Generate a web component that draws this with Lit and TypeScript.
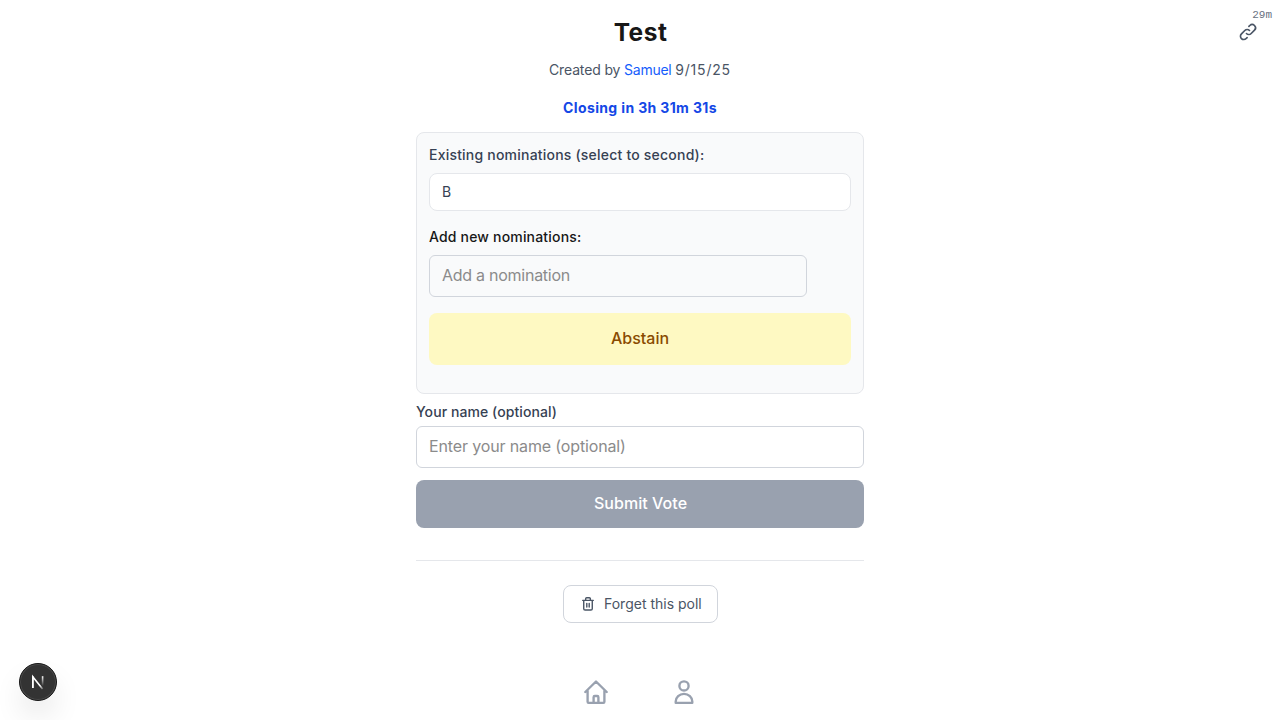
import { LitElement, html, css, svg } from "lit";
import { customElement, property } from "lit/decorators.js";

const icon = (size: number, stroke: number, body: unknown) => html`
  <svg width=${size} height=${size} viewBox="0 0 24 24" fill="none" stroke="currentColor"
    stroke-width=${stroke} stroke-linecap="round" stroke-linejoin="round">${body}</svg>`;

const linkShape = svg`<path d="M13.828 10.172a4 4 0 0 0-5.656 0l-4 4a4 4 0 1 0 5.656 5.656l1.102-1.101m-.758-4.899a4 4 0 0 0 5.656 0l4-4a4 4 0 0 0-5.656-5.656l-1.1 1.1"/>`;
const trashShape = svg`<path d="M4 6.5h16M5.6 6.5V19a2 2 0 0 0 2 2h8.8a2 2 0 0 0 2-2V6.5M8.5 6.5V4.2a1.5 1.5 0 0 1 1.5-1.5h4a1.5 1.5 0 0 1 1.5 1.5v2.3M10.2 11v5.5M13.8 11v5.5"/>`;
const homeShape = svg`<path d="M1.3 12 12 1.5 22.7 12M3.6 10.5v11.3q0 1 1 1h14.8q1 0 1-1V10.5M9.6 22.6v-5.4q0-1.2 1.2-1.2h2.4q1.2 0 1.2 1.2v5.4"/>`;
const userShape = svg`<circle cx="12" cy="5.9" r="4.6"/><path d="M3.7 22.8v-1.3a8.3 7.6 0 0 1 16.6 0v1.3z"/>`;

@customElement("dev-badge")
export class DevBadge extends LitElement {
  static styles = css`
    :host { display: block; box-sizing: border-box; width: 38px; height: 38px; border-radius: 50%; background: #333;
      border: 1px solid #171717; box-shadow: inset 0 0 0 1px #4a4a4a, 0 16px 32px -8px rgba(0,0,0,.24); }
    svg { display: block; width: 36px; height: 36px; }
  `;
  render() {
    return html`<svg viewBox="0 0 36 36" fill="none" stroke-width="1.6">
      <defs>
        <linearGradient id="diag" gradientUnits="userSpaceOnUse" x1="18" y1="18" x2="24" y2="26"><stop offset=".4" stop-color="#fff"/><stop offset="1" stop-color="#fff" stop-opacity="0"/></linearGradient>
        <linearGradient id="stem" gradientUnits="userSpaceOnUse" x1="22" y1="12" x2="22" y2="22"><stop stop-color="#fff"/><stop offset="1" stop-color="#fff" stop-opacity="0"/></linearGradient>
      </defs>
      <path d="M12.8 24V12.8L22.6 25" stroke="url(#diag)"/><path d="M12.8 24V12.2" stroke="#fff"/><path d="M22.6 12.2v10" stroke="url(#stem)"/>
    </svg>`;
  }
}

@customElement("app-root")
export class AppRoot extends LitElement {
  @property() pollTitle = "Test";
  static styles = css`
    :host { display: block; position: relative; height: 720px; overflow: hidden; background: #fff; color: #171717;
      font: 400 14px/20px Inter, "Liberation Sans", sans-serif; }
    * { box-sizing: border-box; }
    svg { display: block; flex: none; }
    input, button { font: inherit; }
    .page { width: 448px; margin: 0 auto; padding-top: 16px; display: flex; flex-direction: column; align-items: stretch; }
    h1 { margin: 0; font-size: 24.5px; line-height: 32px; font-weight: 700; text-align: center; letter-spacing: .5px; padding-left: 1px; }
    .byline { margin-top: 12px; text-align: center; color: #4a5565; letter-spacing: -.15px; }
    .author { color: #155dfc; letter-spacing: -.25px; }
    .date { letter-spacing: .8px; }
    .closing { margin-top: 18px; text-align: center; font-weight: 700; color: #1447e6; letter-spacing: .36px; }
    .card { margin-top: 14px; height: 262px; border: 1px solid #e5e7eb; border-radius: 8px; background: #f9fafb; padding: 12px; display: flex; flex-direction: column; }
    .label { font-weight: 500; color: #364153; letter-spacing: .21px; }
    .option { margin-top: 8px; height: 38px; border: 1px solid #e5e7eb; border-radius: 8px; background: #fff; padding: 8px 12px; color: #364153; text-align: left; }
    .label.adding { margin-top: 16px; color: #171717; letter-spacing: .18px; }
    .field { height: 42px; border: 1px solid #d1d5dc; border-radius: 6px; background: transparent; padding: 7px 12px 9px; font-size: 16px; line-height: 24px; outline: none; color: #171717; }
    .field::placeholder { color: #8b8b8b; opacity: 1; }
    .nomination { margin: 8px 44px 0 0; letter-spacing: -.26px; }
    .person { letter-spacing: -.14px; }
    .abstain { margin-top: 16px; height: 52px; border: 0; border-radius: 8px; background: #fef9c2; color: #894b00; font-size: 16px; font-weight: 500; padding: 0 0 2px; }
    .label.name-label { margin: 8px 0 4px; letter-spacing: .08px; }
    .submit { margin-top: 12px; height: 48px; border: 0; border-radius: 8px; background: #99a1af; color: #fff; font-size: 16px; font-weight: 500; padding: 0 0 2px 1px; letter-spacing: .05px; }
    .footer { margin-top: 32px; padding-top: 24px; border-top: 1px solid #e5e7eb; display: flex; justify-content: center; }
    .forget { width: 155px; height: 38px; border: 1px solid #d1d5dc; border-radius: 8px; background: #fff; color: #4a5565; display: flex; align-items: center; gap: 8.5px; padding: 0 15px 0 16px; white-space: nowrap; }
    .tabs { margin-top: 57px; display: flex; justify-content: center; gap: 64px; color: #99a1af; }
    .age { position: absolute; top: 8px; right: 8px; font: 11px/14px "Liberation Mono", monospace; color: #6a7282; }
    .share { position: absolute; top: 22px; right: 22px; color: #4a5565; }
    .badge { position: absolute; left: 19px; top: 663px; }
  `;
  render() {
    return html`
      <main class="page">
        <h1>${this.pollTitle}</h1>
        <div class="byline">Created by <span class="author">Samuel</span> <span class="date">9/15/25</span></div>
        <div class="closing">Closing in 3h 31m 31s</div>
        <section class="card">
          <div class="label">Existing nominations (select to second):</div>
          <button class="option">B</button>
          <div class="label adding">Add new nominations:</div>
          <input class="field nomination" placeholder="Add a nomination">
          <button class="abstain">Abstain</button>
        </section>
        <div class="label name-label">Your name (optional)</div>
        <input class="field person" placeholder="Enter your name (optional)">
        <button class="submit">Submit Vote</button>
        <div class="footer"><button class="forget">${icon(16, 2.1, trashShape)}<span>Forget this poll</span></button></div>
        <nav class="tabs">${icon(24, 2.35, homeShape)}${icon(24, 2.35, userShape)}</nav>
      </main>
      <div class="age">29m</div>
      <div class="share">${icon(20, 2, linkShape)}</div>
      <dev-badge class="badge"></dev-badge>`;
  }
}
